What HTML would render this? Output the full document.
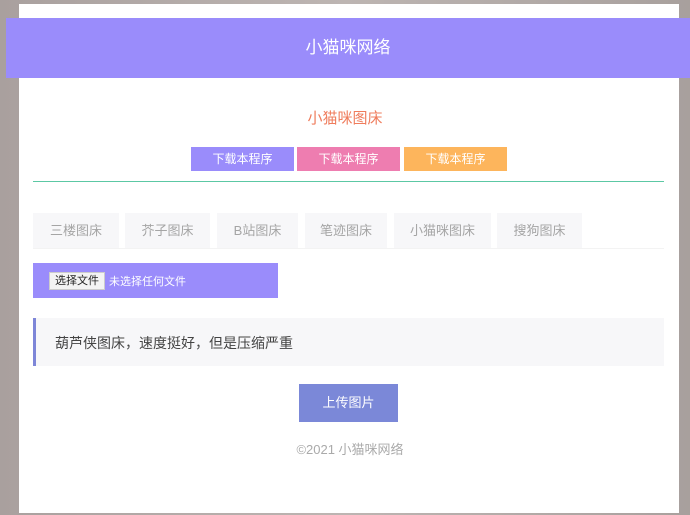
<!DOCTYPE html>
<html><head><meta charset="utf-8"><style>
*{margin:0;padding:0;box-sizing:border-box}
body{width:690px;height:515px;overflow:hidden;background:linear-gradient(90deg,#a9a09e,#bdb5b2 50%,#a8a09d);font-family:"Liberation Sans","Noto Sans CJK SC",sans-serif;position:relative}
.panel{position:absolute;left:19px;top:4px;width:660px;height:509px;background:#fff}
.hdr{position:absolute;left:6px;top:18px;width:684px;height:60px;background:#9a8cfb;color:#fff;font-size:17px;text-align:center;line-height:60px}
.a{position:absolute}
.t{left:0;width:690px;top:107px;text-align:center;color:#ef7c5c;font-size:15px}
.b{top:147px;height:24px;width:103px;color:#fff;font-size:12px;text-align:center;line-height:24px}
.tab{top:213px;height:35px;background:#f7f7f9;color:#a5a5a5;font-size:13px;text-align:center;line-height:35px}
</style></head><body>
<div class="panel"></div>
<div class="hdr">小猫咪网络</div>
<div class="a t">小猫咪图床</div>
<div class="a b" style="left:191px;background:#9a8cfb">下载本程序</div>
<div class="a b" style="left:297px;background:#ee7db0">下载本程序</div>
<div class="a b" style="left:404px;background:#fdb55c">下载本程序</div>
<div class="a" style="left:33px;top:181px;width:631px;height:1px;background:#5cc8a4"></div>
<div class="a tab" style="left:33px;width:86px">三楼图床</div>
<div class="a tab" style="left:125px;width:85px">芥子图床</div>
<div class="a tab" style="left:217px;width:81px">B站图床</div>
<div class="a tab" style="left:305px;width:82px">笔迹图床</div>
<div class="a tab" style="left:394px;width:97px">小猫咪图床</div>
<div class="a tab" style="left:497px;width:85px">搜狗图床</div>
<div class="a" style="left:33px;top:248px;width:631px;height:1px;background:#f3f3f3"></div>
<div class="a" style="left:33px;top:263px;width:245px;height:35px;background:#9a8cfb"></div>
<div class="a" style="left:49px;top:272px;width:56px;height:18px;background:#f3f3f3;border:1px solid #ccc;font-size:11px;line-height:16px;text-align:center;color:#222">选择文件</div>
<div class="a" style="left:109px;top:273px;font-size:11px;color:#fff">未选择任何文件</div>
<div class="a" style="left:33px;top:318px;width:631px;height:48px;background:#f7f7f9;border-left:3px solid #7e86d8"></div>
<div class="a" style="left:55px;top:333px;font-size:14px;color:#444">葫芦侠图床，速度挺好，但是压缩严重</div>
<div class="a" style="left:299px;top:384px;width:99px;height:38px;background:#7b88d8;color:#fff;font-size:13px;text-align:center;line-height:38px">上传图片</div>
<div class="a" style="left:0;width:700px;top:439px;text-align:center;font-size:13px;color:#aaa">©2021 小猫咪网络</div>
</body></html>
